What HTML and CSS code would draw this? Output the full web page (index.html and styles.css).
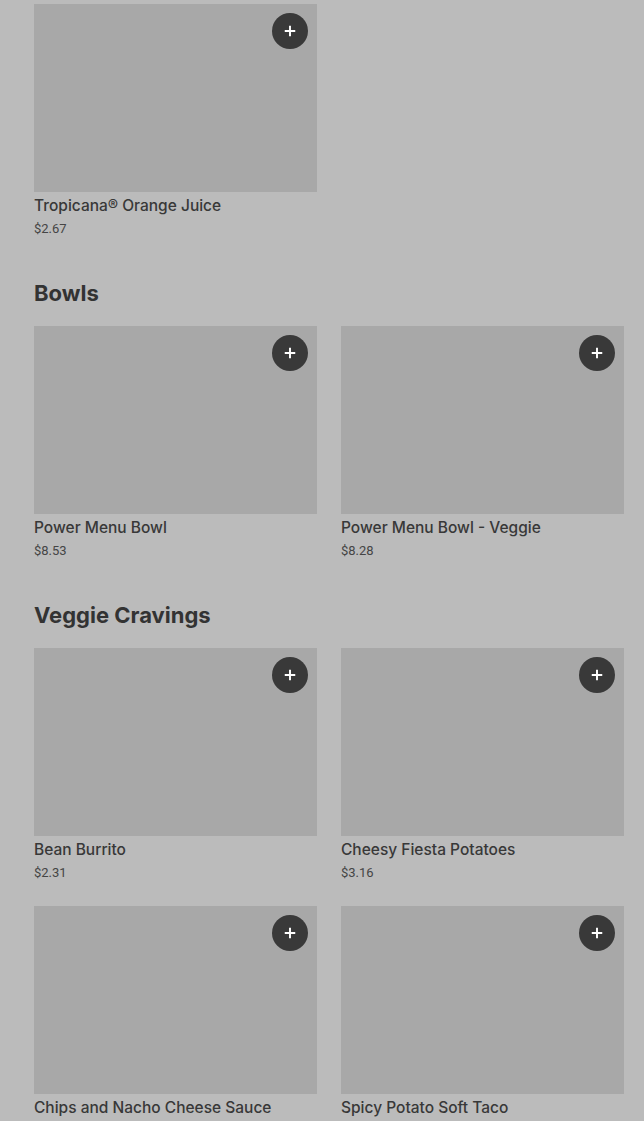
FILE: index.html
```html
<!DOCTYPE html>
<html>
<head>
<meta charset="utf-8">
<link rel="stylesheet" href="styles.css">
</head>
<body>
<main class="menu">
  <section class="section">
    <div class="grid">
      <div class="item">
        <div class="thumb"><button class="add"><svg viewBox="0 0 16 16" width="14" height="14"><path d="M8 2v12M2 8h12" stroke="#fff" stroke-width="2.2"/></svg></button></div>
        <div class="name">Tropicana® Orange Juice</div>
        <div class="price">$2.67</div>
      </div>
    </div>
  </section>
  <section class="section">
    <h2 class="heading">Bowls</h2>
    <div class="grid">
      <div class="item">
        <div class="thumb"><button class="add"><svg viewBox="0 0 16 16" width="14" height="14"><path d="M8 2v12M2 8h12" stroke="#fff" stroke-width="2.2"/></svg></button></div>
        <div class="name">Power Menu Bowl</div>
        <div class="price">$8.53</div>
      </div>
      <div class="item">
        <div class="thumb"><button class="add"><svg viewBox="0 0 16 16" width="14" height="14"><path d="M8 2v12M2 8h12" stroke="#fff" stroke-width="2.2"/></svg></button></div>
        <div class="name">Power Menu Bowl - Veggie</div>
        <div class="price">$8.28</div>
      </div>
    </div>
  </section>
  <section class="section">
    <h2 class="heading">Veggie Cravings</h2>
    <div class="grid">
      <div class="item">
        <div class="thumb"><button class="add"><svg viewBox="0 0 16 16" width="14" height="14"><path d="M8 2v12M2 8h12" stroke="#fff" stroke-width="2.2"/></svg></button></div>
        <div class="name">Bean Burrito</div>
        <div class="price">$2.31</div>
      </div>
      <div class="item">
        <div class="thumb"><button class="add"><svg viewBox="0 0 16 16" width="14" height="14"><path d="M8 2v12M2 8h12" stroke="#fff" stroke-width="2.2"/></svg></button></div>
        <div class="name">Cheesy Fiesta Potatoes</div>
        <div class="price">$3.16</div>
      </div>
      <div class="item">
        <div class="thumb"><button class="add"><svg viewBox="0 0 16 16" width="14" height="14"><path d="M8 2v12M2 8h12" stroke="#fff" stroke-width="2.2"/></svg></button></div>
        <div class="name">Chips and Nacho Cheese Sauce</div>
        <div class="price">$2.54</div>
      </div>
      <div class="item">
        <div class="thumb"><button class="add"><svg viewBox="0 0 16 16" width="14" height="14"><path d="M8 2v12M2 8h12" stroke="#fff" stroke-width="2.2"/></svg></button></div>
        <div class="name">Spicy Potato Soft Taco</div>
        <div class="price">$2.10</div>
      </div>
    </div>
  </section>
</main>
</body>
</html>
```

FILE: styles.css
```css
html, body {
  margin: 0;
  padding: 0;
  background: #bbbbbb;
  height: 1121px;
  overflow: hidden;
}
body {
  font-family: "Inter", "Liberation Sans", sans-serif;
  color: #353535;
}
.menu {
  padding: 4px 20px 0 34px;
  display: flex;
  flex-direction: column;
  gap: 41px;
}
.heading {
  margin: 0 0 19px 0;
  font-family: "Inter", "Liberation Sans", sans-serif;
  font-size: 22px;
  line-height: 28px;
  font-weight: 700;
  letter-spacing: 0;
  color: #333;
}
.grid {
  display: grid;
  grid-template-columns: 283px 283px;
  column-gap: 24px;
  row-gap: 24px;
}
.thumb {
  position: relative;
  height: 188px;
  background: #a8a8a8;
}
.add {
  position: absolute;
  top: 9px;
  right: 9px;
  width: 36px;
  height: 36px;
  border-radius: 50%;
  border: 0;
  padding: 0;
  background: #393939;
  display: flex;
  align-items: center;
  justify-content: center;
}
.name {
  margin-top: 4px;
  font-size: 15.5px;
  line-height: 20px;
  font-weight: 500;
  color: #383838;
}
.price {
  margin-top: 4px;
  font-family: "Roboto", "Liberation Sans", sans-serif;
  font-size: 13px;
  line-height: 18px;
  color: #454545;
}
```
